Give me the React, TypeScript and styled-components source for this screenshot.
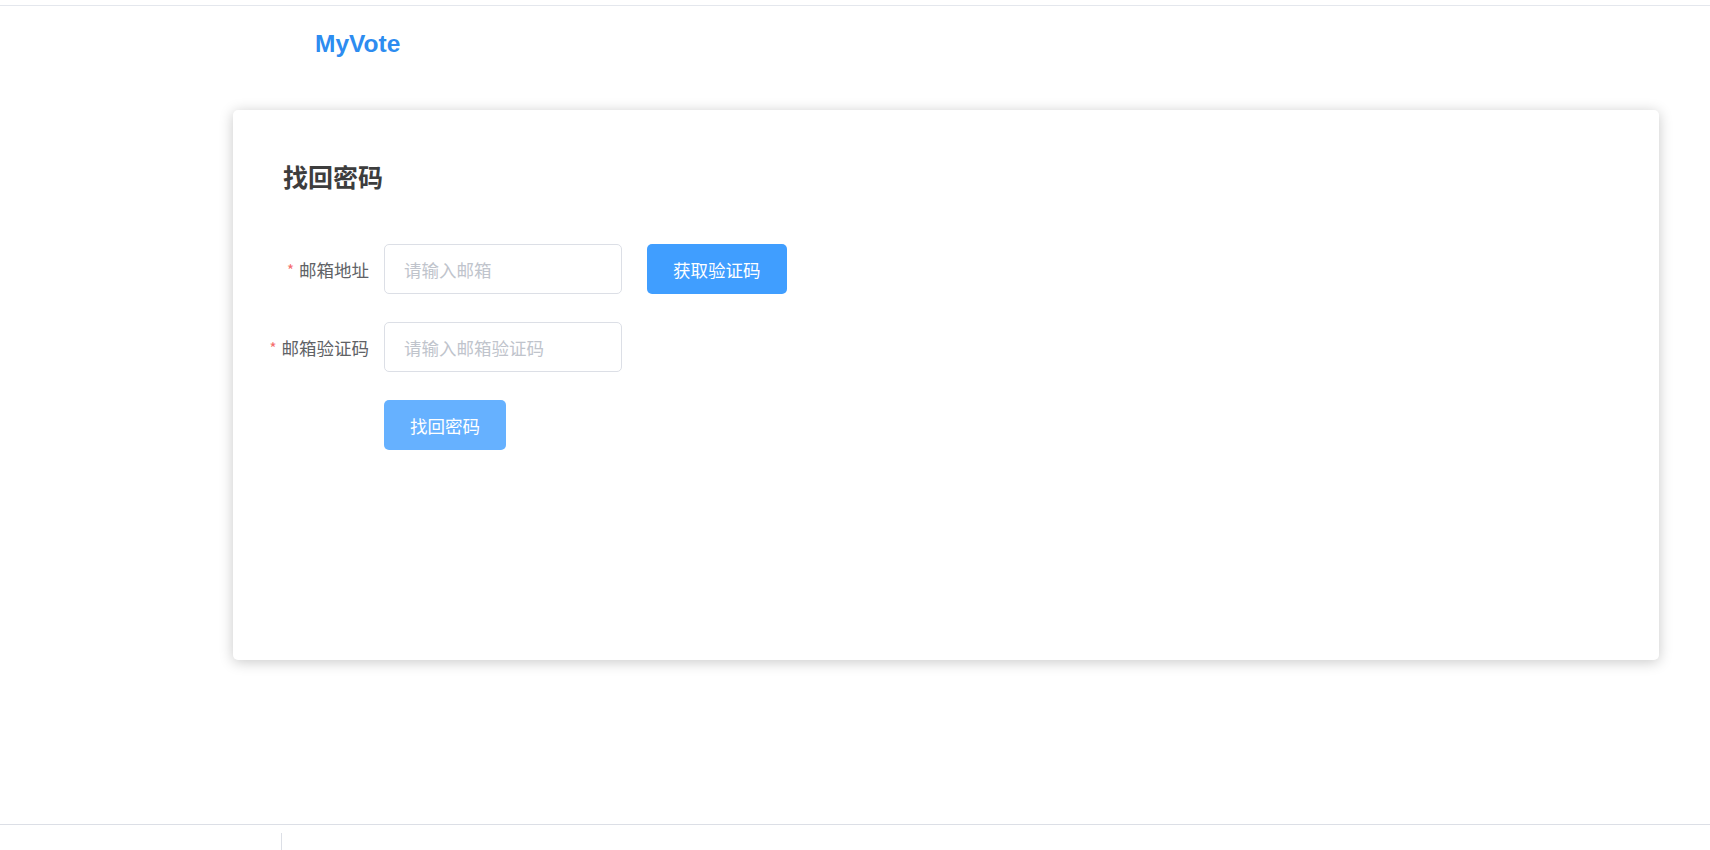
import React, { useState } from 'react';
import styled, { createGlobalStyle } from 'styled-components';

const GlobalStyle = createGlobalStyle`
  html, body {
    margin: 0;
    padding: 0;
    background: #fff;
  }
  body {
    font-family: 'Noto Sans CJK SC', 'Liberation Sans', sans-serif;
    color: #606266;
  }
  * {
    box-sizing: border-box;
  }
`;

const Page = styled.div`
  min-height: 100vh;
  padding-top: 5px;
  overflow: hidden;
`;

const Header = styled.header`
  border-top: 1px solid #e4e7ed;
  padding: 24px 0 0 315px;
  height: 105px;
`;

const Logo = styled.h1`
  margin: 0;
  font-family: 'Liberation Sans', Arial, sans-serif;
  font-size: 24.5px;
  line-height: 28px;
  font-weight: 700;
  color: #2d8cf0;
`;

const Card = styled.section`
  margin: 0 51px 0 233px;
  height: 550px;
  background: #fff;
  border-radius: 5px;
  box-shadow: 0 2px 14px 0 rgba(0, 0, 0, 0.22);
  padding: 49px 50px;
`;

const Title = styled.h2`
  margin: 0 0 51px;
  font-size: 25px;
  line-height: 34px;
  font-weight: 700;
  color: #3d3d3d;
`;

const Form = styled.form`
  display: flex;
  flex-direction: column;
  gap: 28px;
`;

const Row = styled.div`
  display: flex;
  align-items: center;
  height: 50px;
`;

const Label = styled.label`
  width: 101px;
  flex-shrink: 0;
  display: flex;
  justify-content: flex-end;
  align-items: center;
  padding-right: 15px;
  white-space: nowrap;
  font-size: 17.5px;
  color: #606266;
`;

const Required = styled.span`
  color: #f56c6c;
  font-size: 15px;
  margin-right: 5px;
`;

const Input = styled.input`
  width: 238px;
  height: 50px;
  padding: 0 19px;
  border: 1px solid #dcdfe6;
  border-radius: 5px;
  font-family: inherit;
  font-size: 17.5px;
  color: #606266;
  outline: none;

  &::placeholder {
    color: #c0c4cc;
  }
  &:focus {
    border-color: #409eff;
  }
`;

const Button = styled.button<{ $muted?: boolean }>`
  height: 50px;
  padding: 0 26px;
  border: none;
  border-radius: 5px;
  background: ${({ $muted }) => ($muted ? '#66b1ff' : '#409eff')};
  color: #fff;
  font-family: inherit;
  font-size: 17.5px;
  cursor: pointer;
`;

const CodeButton = styled(Button)`
  margin-left: 25px;
`;

const Actions = styled.div`
  padding-left: 101px;
  height: 50px;
`;

const Footer = styled.footer`
  margin-top: 164px;
  border-top: 1px solid #dcdfe6;
  height: 40px;
  padding: 8px 0 0 281px;
`;

const Divider = styled.span`
  display: block;
  width: 1px;
  height: 24px;
  background: #dcdfe6;
`;

export default function App() {
  const [email, setEmail] = useState('');
  const [code, setCode] = useState('');

  return (
    <Page>
      <GlobalStyle />
      <Header>
        <Logo>MyVote</Logo>
      </Header>
      <Card>
        <Title>找回密码</Title>
        <Form onSubmit={(e) => e.preventDefault()}>
          <Row>
            <Label>
              <Required>*</Required>邮箱地址
            </Label>
            <Input
              placeholder="请输入邮箱"
              value={email}
              onChange={(e) => setEmail(e.target.value)}
            />
            <CodeButton type="button">获取验证码</CodeButton>
          </Row>
          <Row>
            <Label>
              <Required>*</Required>邮箱验证码
            </Label>
            <Input
              placeholder="请输入邮箱验证码"
              value={code}
              onChange={(e) => setCode(e.target.value)}
            />
          </Row>
          <Actions>
            <Button type="submit" $muted>
              找回密码
            </Button>
          </Actions>
        </Form>
      </Card>
      <Footer>
        <Divider />
      </Footer>
    </Page>
  );
}
